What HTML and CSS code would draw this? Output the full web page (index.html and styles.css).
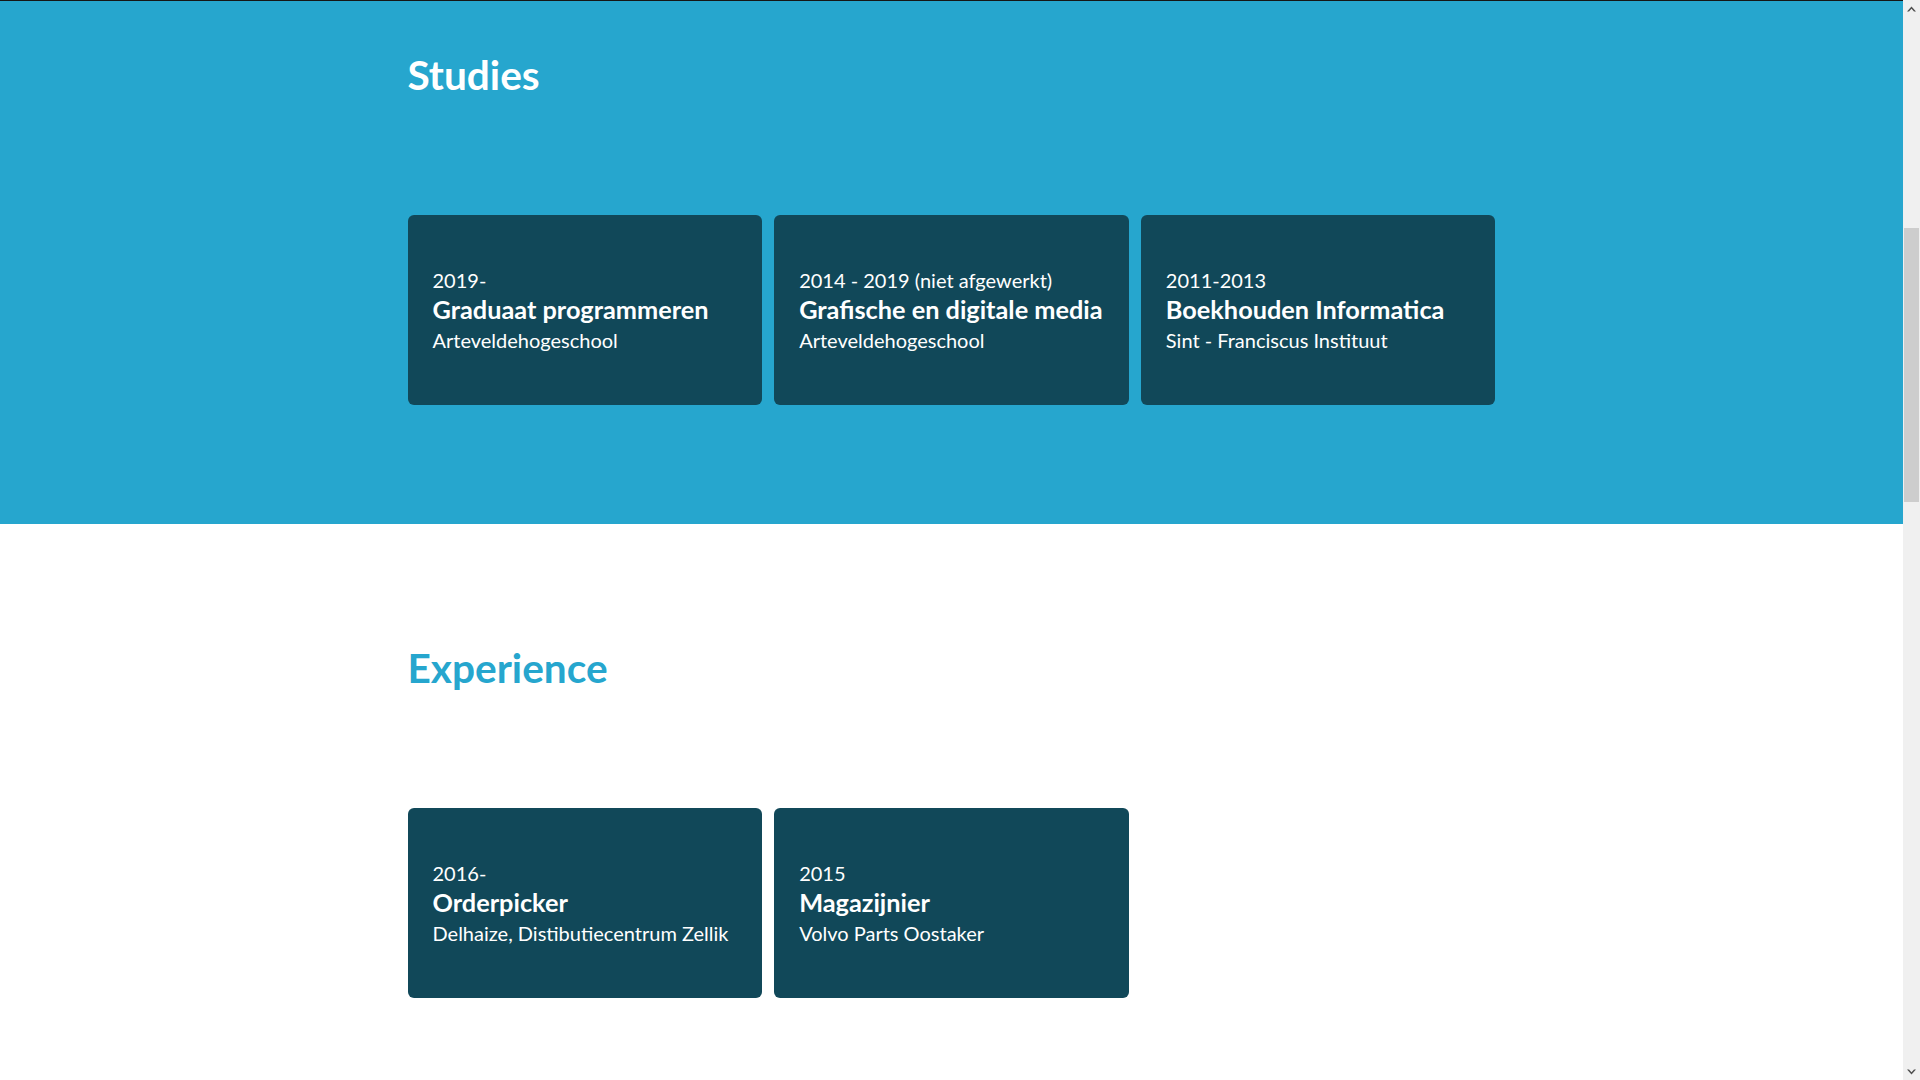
FILE: index.html
```html
<!DOCTYPE html>
<html lang="nl">
<head>
<meta charset="utf-8">
<title>CV</title>
<link rel="stylesheet" href="styles.css">
</head>
<body>
  <header class="hero"></header>

  <section class="section section--studies">
    <div class="container">
      <h2 class="section__title">Studies</h2>
      <div class="cards">
        <article class="card">
          <p class="card__period">2019-</p>
          <h3 class="card__title">Graduaat programmeren</h3>
          <p class="card__place">Arteveldehogeschool</p>
        </article>
        <article class="card">
          <p class="card__period">2014 - 2019 (niet afgewerkt)</p>
          <h3 class="card__title">Grafische en digitale media</h3>
          <p class="card__place">Arteveldehogeschool</p>
        </article>
        <article class="card">
          <p class="card__period">2011-2013</p>
          <h3 class="card__title">Boekhouden Informatica</h3>
          <p class="card__place">Sint - Franciscus Instituut</p>
        </article>
      </div>
    </div>
  </section>

  <section class="section section--experience">
    <div class="container">
      <h2 class="section__title">Experience</h2>
      <div class="cards">
        <article class="card">
          <p class="card__period">2016-</p>
          <h3 class="card__title">Orderpicker</h3>
          <p class="card__place">Delhaize, Distibutiecentrum Zellik</p>
        </article>
        <article class="card">
          <p class="card__period">2015</p>
          <h3 class="card__title">Magazijnier</h3>
          <p class="card__place">Volvo Parts Oostaker</p>
        </article>
      </div>
    </div>
  </section>

  <section class="section section--rest"></section>

  <div class="scrollbar" aria-hidden="true">
    <div class="scrollbar__button">
      <svg width="9" height="6" viewBox="0 0 9 6"><path d="M0 5.5 L4.5 0.5 L9 5.5 L7 5.5 L4.5 2.8 L2 5.5 Z" fill="#505050"/></svg>
    </div>
    <div class="scrollbar__track">
      <div class="scrollbar__thumb"></div>
    </div>
    <div class="scrollbar__button">
      <svg width="9" height="6" viewBox="0 0 9 6"><path d="M0 0.5 L4.5 5.5 L9 0.5 L7 0.5 L4.5 3.2 L2 0.5 Z" fill="#505050"/></svg>
    </div>
  </div>

  <script src="script.js"></script>
</body>
</html>
```

FILE: styles.css
```css
* {
  box-sizing: border-box;
}

body {
  margin: 0 17px 0 0;
  font-family: "Lato", "Liberation Sans", sans-serif;
  color: #ffffff;
  background: #ffffff;
}

.hero {
  height: 833px;
  background: #161616;
}

.container {
  width: 1088px;
  margin: 0 auto;
}

.section--studies {
  background: #26a6ce;
  padding: 50px 0 119px;
}

.section--experience {
  background: #ffffff;
  padding: 120px 0 119px;
}

.section--rest {
  height: 2057px;
  background: #ffffff;
}

.section__title {
  margin: 0 0 116px;
  font-size: 40.6px;
  line-height: 48px;
  font-weight: 700;
  color: #ffffff;
}

.section--experience .section__title {
  color: #26a6ce;
}

.cards {
  display: grid;
  grid-template-columns: repeat(3, 1fr);
  gap: 12px;
}

.card {
  background: #114859;
  border-radius: 6px;
  padding: 51px 18px 50px 25px;
}

.card__period {
  margin: 0;
  font-size: 20px;
  line-height: 28px;
  font-weight: 400;
}

.card__title {
  margin: 0;
  font-size: 25.3px;
  line-height: 31px;
  font-weight: 700;
}

.card__place {
  margin: 0;
  font-size: 20px;
  line-height: 30px;
  font-weight: 400;
}

/* static rendering of the browser's classic scrollbar */
.scrollbar {
  position: fixed;
  top: 0;
  right: 0;
  width: 17px;
  height: 100vh;
  background: #f0f0f0;
  display: flex;
  flex-direction: column;
}

.scrollbar__button {
  height: 17px;
  display: flex;
  align-items: center;
  justify-content: center;
}

.scrollbar__track {
  flex: 1;
  padding: 211px 1px 0 1px;
}

.scrollbar__thumb {
  height: 274px;
  background: #cdcdcd;
}
```

FILE: script.js
```js
window.scrollTo(0, 832);
window.addEventListener('load', function () {
  window.scrollTo(0, 832);
});
```
